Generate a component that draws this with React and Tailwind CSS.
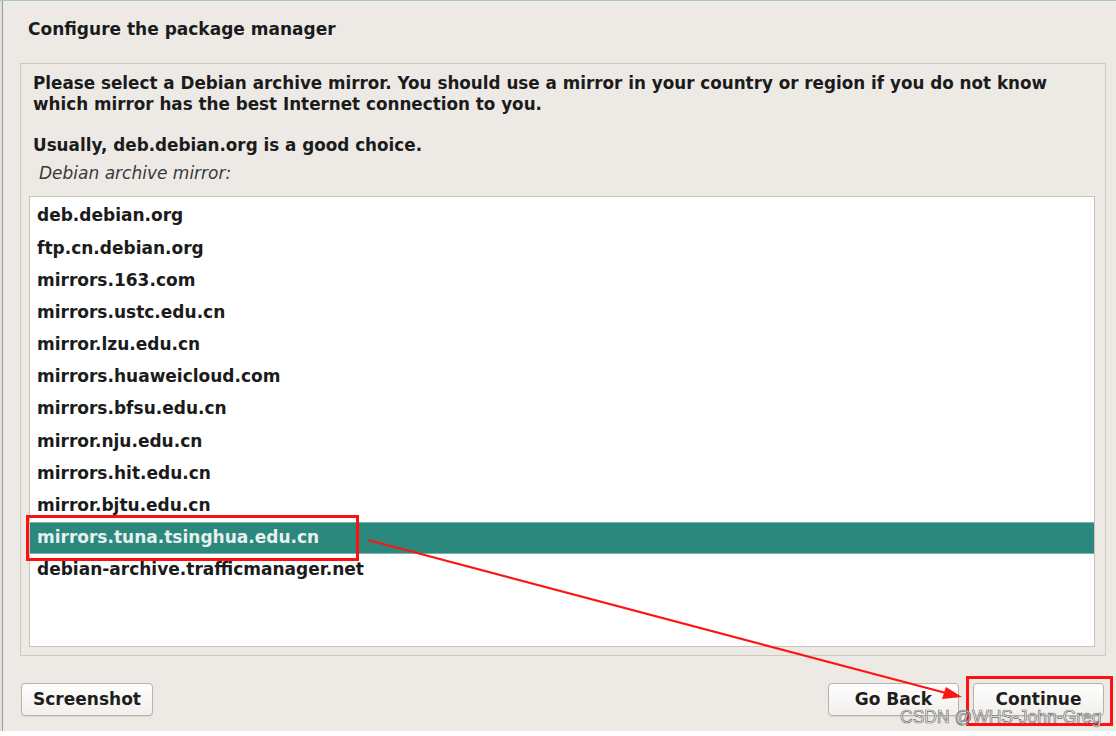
import React from "react";

const mirrors = [
  "deb.debian.org",
  "ftp.cn.debian.org",
  "mirrors.163.com",
  "mirrors.ustc.edu.cn",
  "mirror.lzu.edu.cn",
  "mirrors.huaweicloud.com",
  "mirrors.bfsu.edu.cn",
  "mirror.nju.edu.cn",
  "mirrors.hit.edu.cn",
  "mirror.bjtu.edu.cn",
  "mirrors.tuna.tsinghua.edu.cn",
  "debian-archive.trafficmanager.net",
];

function Button({ children, className = "" }) {
  return (
    <button
      className={
        "h-[33px] rounded-[4px] border border-[#b9b1a7] bg-gradient-to-b from-[#ffffff] to-[#f1efec] shadow-[0_1px_0_rgba(0,0,0,0.08)] text-[17px] font-bold text-[#1e1e1e] leading-none " +
        className
      }
    >
      {children}
    </button>
  );
}

export default function App() {
  return (
    <div className="relative w-[1116px] h-[736px] overflow-hidden bg-[#edeae6] font-['DejaVu_Sans',sans-serif] text-[#1b1b1b]">
      <div className="flex h-[731px] border-t border-[#a9c5c5]">
        <div className="w-[2px] bg-[#e3e1de]" />
        <div className="w-[1px] bg-[#9d9d9d]" />
        <div className="flex-1 flex flex-col">
          <div className="pt-[18px] pl-[25px] text-[17px] font-bold leading-[20px]">
            Configure the package manager
          </div>

          <div className="mt-[24px] ml-[17px] mr-[10px] h-[593px] border border-[#d0c9bf] flex flex-col">
            <div className="pl-[12px] pt-[9px] text-[16.8px] font-bold leading-[21px]">
              Please select a Debian archive mirror. You should use a mirror in your country or region if you do not know
              <br />
              which mirror has the best Internet connection to you.
            </div>
            <div className="pl-[12px] mt-[20px] text-[16.8px] font-bold leading-[21px]">
              Usually, deb.debian.org is a good choice.
            </div>
            <div className="pl-[18px] mt-[7px] text-[17px] italic leading-[21px] text-[#3a3a3a]">
              Debian archive mirror:
            </div>
            <div className="mt-[12px] ml-[8px] mr-[10px] mb-[8px] flex-1 border border-[#cbc3b8] bg-white pt-[3px]">
              {mirrors.map((m, i) =>
                i === 10 ? (
                  <div
                    key={m}
                    className="h-[32.2px] flex items-center pl-[7px] bg-[#2b887d] border-y border-[#79b3aa] text-[17px] font-bold text-[#e7f0ee]"
                  >
                    {m}
                  </div>
                ) : (
                  <div
                    key={m}
                    className="h-[32.2px] flex items-center pl-[7px] text-[17px] font-bold"
                  >
                    {m}
                  </div>
                )
              )}
            </div>
          </div>

          <div className="mt-[27px] flex items-center pl-[18px] pr-[12px]">
            <Button className="w-[132px]">Screenshot</Button>
            <div className="flex-1" />
            <Button className="w-[131px]">Go Back</Button>
            <Button className="w-[131px] ml-[14px]">Continue</Button>
          </div>
        </div>
      </div>
      <div className="h-[5px] bg-white" />

      {/* annotations */}
      <div className="absolute left-[26px] top-[515px] w-[333px] h-[46px] border-[3px] border-[#ff1010]" />
      <div className="absolute left-[966px] top-[676px] w-[147px] h-[50px] border-[3px] border-[#ff1010]" />
      <svg className="absolute left-0 top-0" width="1116" height="736">
        <line x1="368" y1="540" x2="946" y2="693" stroke="#ff1414" strokeWidth="2.2" />
        <polygon points="962,697 942,699 946,687" fill="#ff1414" />
      </svg>
      <div className="absolute left-[900px] top-[706px] text-[17.5px] leading-[22px] font-['Liberation_Sans',sans-serif] text-white [-webkit-text-stroke:0.7px_#6f6f6f]">
        CSDN @WHS-John-Greg
      </div>
    </div>
  );
}
